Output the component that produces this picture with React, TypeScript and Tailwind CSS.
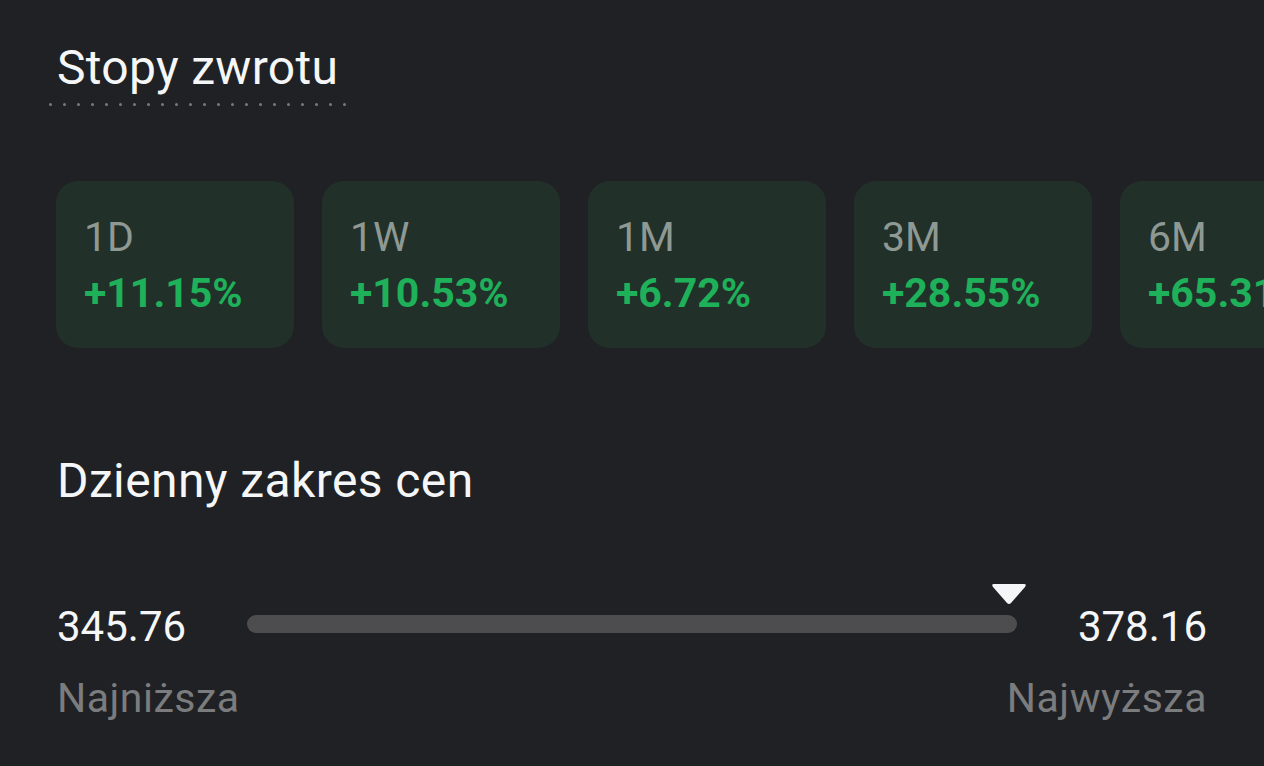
const returns = [
  { label: '1D', value: '+11.15%' },
  { label: '1W', value: '+10.53%' },
  { label: '1M', value: '+6.72%' },
  { label: '3M', value: '+28.55%' },
  { label: '6M', value: '+65.31%' },
];

function ReturnCard({ label, value }: { label: string; value: string }) {
  return (
    <div className="shrink-0 w-[238px] h-[167px] rounded-[22px] bg-[#22302a] pl-[28px] pt-[36px]">
      <div className="text-[41px] leading-[41px] text-[#8e9993]">{label}</div>
      <div className="mt-[15px] text-[41px] leading-[41px] font-bold text-[#1eb15a] whitespace-nowrap">
        {value}
      </div>
    </div>
  );
}

export default function App() {
  return (
    <div
      className="w-[1264px] h-[766px] overflow-hidden bg-[#202124] text-[#f5f6f8]"
      style={{ fontFamily: 'Roboto, "Noto Sans", sans-serif' }}
    >
      {/* Stopy zwrotu */}
      <div className="pt-[44px] pl-[49px]">
        <div className="inline-flex flex-col">
          <h2 className="px-[8px] text-[48px] leading-[48px] tracking-[0.3px] font-normal">Stopy zwrotu</h2>
          <div className="mt-[11px] flex gap-[11px]">
            {Array.from({ length: 22 }).map((_, i) => (
              <span key={i} className="w-[3px] h-[3px] rounded-full bg-[#77797c]" />
            ))}
          </div>
        </div>
      </div>

      <div className="mt-[75px] pl-[56px] flex gap-[28px] overflow-hidden">
        {returns.map((r) => (
          <ReturnCard key={r.label} {...r} />
        ))}
      </div>

      {/* Dzienny zakres cen */}
      <div className="px-[57px]">
        <h2 className="mt-[109px] text-[48px] leading-[48px] tracking-[0.4px] font-normal">Dzienny zakres cen</h2>

        <div className="mt-[101px] flex items-start">
          <span className="w-[190px] text-[42px] leading-[42px]">345.76</span>
          <div className="relative flex-1 mt-[9px]">
            <div className="h-[18px] rounded-full bg-[#4d4d4f]" />
            <svg
              className="absolute right-[-10px] top-[-32px]"
              width="36"
              height="23"
              viewBox="0 0 36 23"
            >
              <path d="M3 1 H33 Q36 1 34 4 L20 20 Q18 22 16 20 L2 4 Q0 1 3 1 Z" fill="#f5f6f8" />
            </svg>
          </div>
          <span className="w-[190px] text-right text-[42px] leading-[42px]">378.16</span>
        </div>

        <div className="mt-[30px] flex justify-between text-[41px] leading-[41px] tracking-[0.5px] text-[#7b7c7e]">
          <span>Najniższa</span>
          <span>Najwyższa</span>
        </div>
      </div>
    </div>
  );
}
